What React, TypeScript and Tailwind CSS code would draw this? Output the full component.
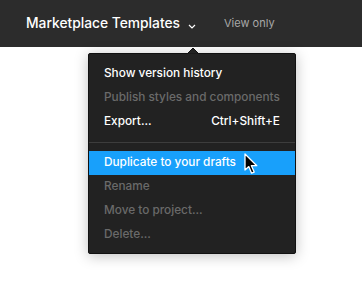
import React from "react";

const font = { fontFamily: "Inter, 'Noto Sans', sans-serif" };

function Row({
  label,
  shortcut,
  disabled,
  active,
}: {
  label: string;
  shortcut?: string;
  disabled?: boolean;
  active?: boolean;
}) {
  return (
    <div
      className={`flex h-6 items-center justify-between whitespace-nowrap pl-[15px] pr-[15px] text-[11.8px] font-medium ${
        active ? "bg-[#18a0fb] text-white" : disabled ? "text-[#6a6a6a]" : "text-white"
      }`}
    >
      <span>{label}</span>
      {shortcut && <span>{shortcut}</span>}
    </div>
  );
}

export default function App() {
  return (
    <div className="relative h-[287px] w-[362px] overflow-hidden bg-white" style={font}>
      <div className="flex h-[47px] items-center bg-[#2c2c2c] pl-[26px]">
        <span className="text-[13.8px] font-medium text-white">Marketplace Templates</span>
        <svg className="ml-[8px] mt-[5px]" width="8" height="5" viewBox="0 0 8 5" fill="none">
          <path d="M1 1l3 3 3-3" stroke="#fff" strokeWidth="1.2" />
        </svg>
        <span className="ml-[28px] text-[11px] text-[#a8a8a8]">View only</span>
      </div>

      <div className="absolute left-[88px] top-[53px] w-[208px] rounded-[2px] border border-[#111] bg-[#222222] pb-[6px] pt-[8px] shadow-[0_2px_14px_rgba(0,0,0,0.25)]">
        <svg className="absolute left-[98px] top-[-7px]" width="12" height="7" viewBox="0 0 12 7">
          <path d="M0 7L6 1L12 7Z" fill="#222" stroke="#111" strokeWidth="1" />
        </svg>
        <Row label="Show version history" />
        <Row label="Publish styles and components" disabled />
        <Row label="Export..." shortcut="Ctrl+Shift+E" />
        <div className="my-[8px] h-px bg-[#3d3d3d]" />
        <Row label="Duplicate to your drafts" active />
        <Row label="Rename" disabled />
        <Row label="Move to project..." disabled />
        <Row label="Delete..." disabled />
      </div>

      <svg className="absolute left-[244px] top-[153px]" width="15" height="22" viewBox="0 0 15 22">
        <path
          d="M1 1V17L4.8 13.6L7.6 20.2L10.2 19.1L7.4 12.7H12.8Z"
          fill="#000"
          stroke="#fff"
          strokeWidth="1.3"
          strokeLinejoin="round"
        />
      </svg>
    </div>
  );
}
